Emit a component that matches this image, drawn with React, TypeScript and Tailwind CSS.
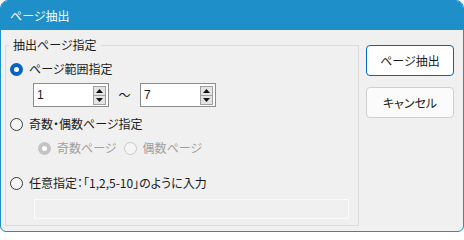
import React from "react";

const font = "font-['Noto_Sans_CJK_JP','Noto_Sans',sans-serif] [font-feature-settings:'palt']";

const Radio = ({
  checked,
  disabled,
  label,
}: {
  checked?: boolean;
  disabled?: boolean;
  label: string;
}) => (
  <div className="flex items-center h-4">
    {checked ? (
      <span
        className={`w-[13px] h-[13px] rounded-full flex items-center justify-center ${
          disabled ? "bg-[#c4c4c4]" : "bg-[#0563c1]"
        }`}
      >
        <span className="w-[5px] h-[5px] rounded-full bg-white" />
      </span>
    ) : (
      <span
        className={`w-[13px] h-[13px] rounded-full border bg-[#f5f5f5] ${
          disabled ? "border-[#c8c8c8]" : "border-[#3c3c3c]"
        }`}
      />
    )}
    <span
      className={`ml-[6px] text-[12px] leading-4 ${
        disabled ? "text-[#a0a0a0]" : "text-[#1a1a1a]"
      }`}
    >
      {label}
    </span>
  </div>
);

const Spin = ({ value }: { value: string }) => (
  <div className="w-[76px] h-[24px] bg-white border border-[#8c8c8c] flex items-center pl-[3px] pr-[2px]">
    <span className="flex-1 text-[12px] leading-4 text-[#1a1a1a] font-['Segoe_UI','Liberation_Sans',sans-serif]">
      {value}
    </span>
    <div className="w-[13px] h-[19px] flex flex-col border border-[#a0a0a0] bg-[#e4e4e4]">
      <div className="flex-1 flex items-center justify-center border-b border-[#a0a0a0]">
        <svg width="7" height="4" viewBox="0 0 7 4">
          <path d="M3.5 0L7 4H0z" fill="#111" />
        </svg>
      </div>
      <div className="flex-1 flex items-center justify-center">
        <svg width="7" height="4" viewBox="0 0 7 4">
          <path d="M0 0H7L3.5 4z" fill="#111" />
        </svg>
      </div>
    </div>
  </div>
);

export default function App() {
  return (
    <div
      className={`w-[464px] h-[232px] rounded-t-[8px] rounded-b-[6px] border border-[#1e8fc8] overflow-hidden bg-[#f0f0f0] flex flex-col ${font}`}
    >
      <div className="h-[29px] bg-[#1e8fc8] flex items-center pl-[9px] text-white text-[12px]">
        ページ抽出
      </div>
      <div className="flex flex-1">
        <fieldset className="ml-[4px] mt-[7px] w-[354px] h-[189px] border border-[#dcdcdc]">
          <legend className="ml-[3px] px-[4px] text-[12px] leading-4 text-[#1a1a1a]">
            抽出ページ指定
          </legend>
          <div className="pl-[4px]">
            <div className="mt-[8px]">
              <Radio checked label="ページ範囲指定" />
            </div>
            <div className="mt-[6px] ml-[23px] flex items-center">
              <Spin value="1" />
              <span className="w-[31px] text-center text-[12px] text-[#1a1a1a]">～</span>
              <Spin value="7" />
            </div>
            <div className="mt-[9px]">
              <Radio label="奇数・偶数ページ指定" />
            </div>
            <div className="mt-[8px] ml-[28px] flex gap-[7px]">
              <Radio checked disabled label="奇数ページ" />
              <Radio disabled label="偶数ページ" />
            </div>
            <div className="mt-[19px]">
              <Radio label="任意指定：「1,2,5-10」のように入力" />
            </div>
            <div className="mt-[8px] ml-[24px] w-[315px] h-[20px] border border-[#fbfbfb]" />
          </div>
        </fieldset>
        <div className="ml-[7px] mt-[15px] flex flex-col gap-[11px]">
          <button className="w-[88px] h-[31px] rounded-[4px] bg-white border border-[#0067c0] text-[12px] text-[#1a1a1a]">
            ページ抽出
          </button>
          <button className="w-[88px] h-[31px] rounded-[4px] bg-[#fbfbfb] border border-[#d0d0d0] text-[12px] text-[#1a1a1a]">
            キャンセル
          </button>
        </div>
      </div>
    </div>
  );
}
